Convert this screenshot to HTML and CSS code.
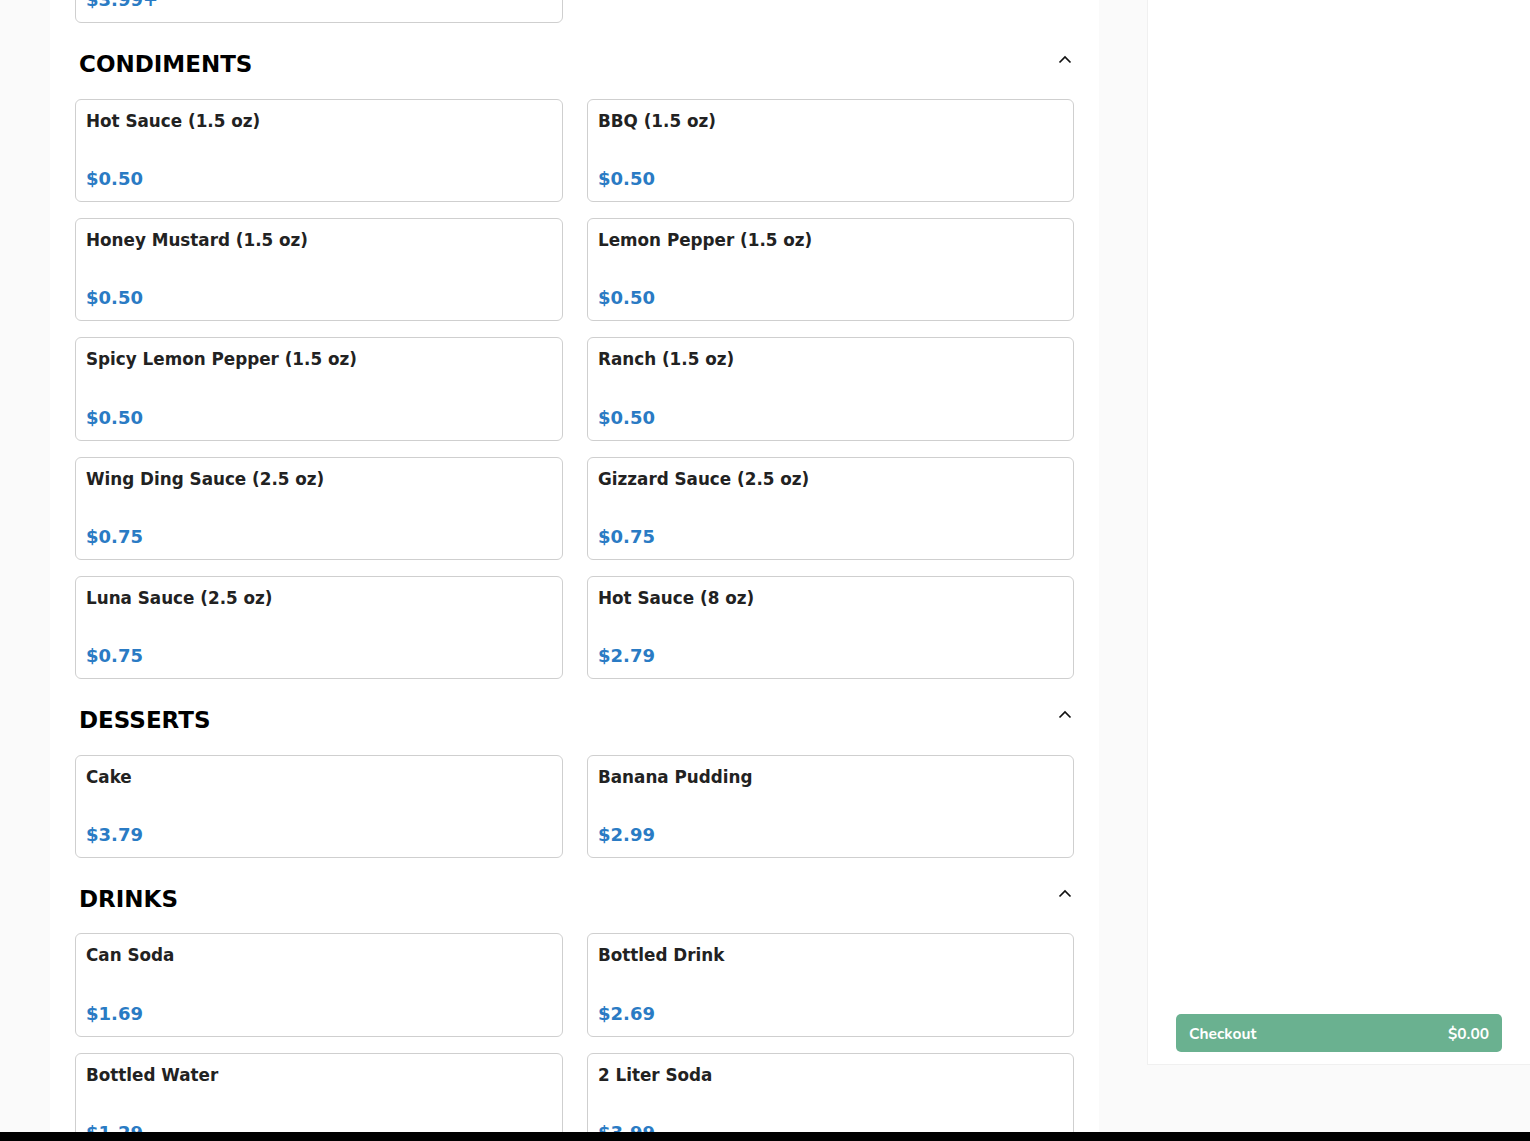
FILE: index.html
```html
<!DOCTYPE html>
<html lang="en">
<head>
<meta charset="UTF-8">
<title>Menu</title>
<link rel="stylesheet" href="styles.css">
</head>
<body>
  <div class="page">
    <main class="menu">
      <!-- previous section, scrolled past -->
      <div class="grid grid-prev">
        <div class="item"><div class="item-name">Family Meal</div><div class="item-price">$3.99+</div></div>
      </div>

      <section class="category">
        <div class="category-head">
          <h2>CONDIMENTS</h2>
          <svg class="chevron" width="14" height="9" viewBox="0 0 14 9"><path d="M1.5 7.5 L7 2 L12.5 7.5" fill="none" stroke="#111" stroke-width="1.7"/></svg>
        </div>
        <div class="grid">
          <div class="item"><div class="item-name">Hot Sauce (1.5 oz)</div><div class="item-price">$0.50</div></div>
          <div class="item"><div class="item-name">BBQ (1.5 oz)</div><div class="item-price">$0.50</div></div>
          <div class="item"><div class="item-name">Honey Mustard (1.5 oz)</div><div class="item-price">$0.50</div></div>
          <div class="item"><div class="item-name">Lemon Pepper (1.5 oz)</div><div class="item-price">$0.50</div></div>
          <div class="item"><div class="item-name">Spicy Lemon Pepper (1.5 oz)</div><div class="item-price">$0.50</div></div>
          <div class="item"><div class="item-name">Ranch (1.5 oz)</div><div class="item-price">$0.50</div></div>
          <div class="item"><div class="item-name">Wing Ding Sauce (2.5 oz)</div><div class="item-price">$0.75</div></div>
          <div class="item"><div class="item-name">Gizzard Sauce (2.5 oz)</div><div class="item-price">$0.75</div></div>
          <div class="item"><div class="item-name">Luna Sauce (2.5 oz)</div><div class="item-price">$0.75</div></div>
          <div class="item"><div class="item-name">Hot Sauce (8 oz)</div><div class="item-price">$2.79</div></div>
        </div>
      </section>

      <section class="category">
        <div class="category-head">
          <h2>DESSERTS</h2>
          <svg class="chevron" width="14" height="9" viewBox="0 0 14 9"><path d="M1.5 7.5 L7 2 L12.5 7.5" fill="none" stroke="#111" stroke-width="1.7"/></svg>
        </div>
        <div class="grid">
          <div class="item"><div class="item-name">Cake</div><div class="item-price">$3.79</div></div>
          <div class="item"><div class="item-name">Banana Pudding</div><div class="item-price">$2.99</div></div>
        </div>
      </section>

      <section class="category">
        <div class="category-head">
          <h2>DRINKS</h2>
          <svg class="chevron" width="14" height="9" viewBox="0 0 14 9"><path d="M1.5 7.5 L7 2 L12.5 7.5" fill="none" stroke="#111" stroke-width="1.7"/></svg>
        </div>
        <div class="grid">
          <div class="item"><div class="item-name">Can Soda</div><div class="item-price">$1.69</div></div>
          <div class="item"><div class="item-name">Bottled Drink</div><div class="item-price">$2.69</div></div>
          <div class="item"><div class="item-name">Bottled Water</div><div class="item-price">$1.29</div></div>
          <div class="item"><div class="item-name">2 Liter Soda</div><div class="item-price">$3.99</div></div>
        </div>
      </section>
    </main>

    <aside class="cart">
      <button class="checkout"><span>Checkout</span><span>$0.00</span></button>
    </aside>
  </div>
  <div class="bottom-bar"></div>
</body>
</html>
```

FILE: styles.css
```css
html, body {
    margin: 0;
    padding: 0;
    height: 100%;
    overflow: hidden;
}
body {
    background: #fafafa;
    font-family: 'DejaVu Sans', sans-serif;
    color: #222;
}
.page {
    display: flex;
    align-items: flex-start;
    height: 1132px;
    overflow: hidden;
}
.menu {
    width: 1049px;
    margin-left: 50px;
    background: #fff;
    padding: 0 25px;
    box-sizing: border-box;
    margin-top: -80px; /* list is scrolled down */
    flex-shrink: 0;
}
.grid {
    display: grid;
    grid-template-columns: 488px 487px;
    column-gap: 24px;
    row-gap: 16px;
}
.item {
    border: 1px solid #cfcfcf;
    border-radius: 6px;
    height: 103.25px;
    box-sizing: border-box;
    padding: 11px 10px 11px;
    display: flex;
    flex-direction: column;
    justify-content: space-between;
}
.item-name {
    font-size: 16.8px;
    font-weight: bold;
    color: #222;
    line-height: 20px;
}
.item-price {
    font-size: 18px;
    font-weight: bold;
    color: #2a7bc4;
    line-height: 22px;
}
.category-head {
    display: flex;
    justify-content: space-between;
    align-items: center;
    height: 75.5px;
    padding: 0 2px 0 4px;
    box-sizing: border-box;
}
.category-head h2 {
    margin: 6px 0 0 0;
    font-size: 23px;
    font-weight: bold;
    color: #000;
}
.chevron {
    margin-top: -4px;
}
.cart {
    margin-left: 48px;
    width: 383px;
    height: 1065px;
    background: #fff;
    border-left: 1px solid #f0f0f0;
    border-bottom: 1px solid #f0f0f0;
    box-sizing: border-box;
    display: flex;
    flex-direction: column;
    justify-content: flex-end;
    padding: 0 28px 12px 28px;
}
.checkout {
    display: flex;
    justify-content: space-between;
    align-items: center;
    height: 38px;
    border: none;
    border-radius: 5px;
    background: #6ab190;
    color: #fff;
    font-family: 'Nunito', 'Lato', sans-serif;
    font-weight: bold;
    font-size: 15.5px;
    padding: 1px 13px 0;
    width: 100%;
}
.bottom-bar {
    height: 9px;
    background: #000;
}
```
